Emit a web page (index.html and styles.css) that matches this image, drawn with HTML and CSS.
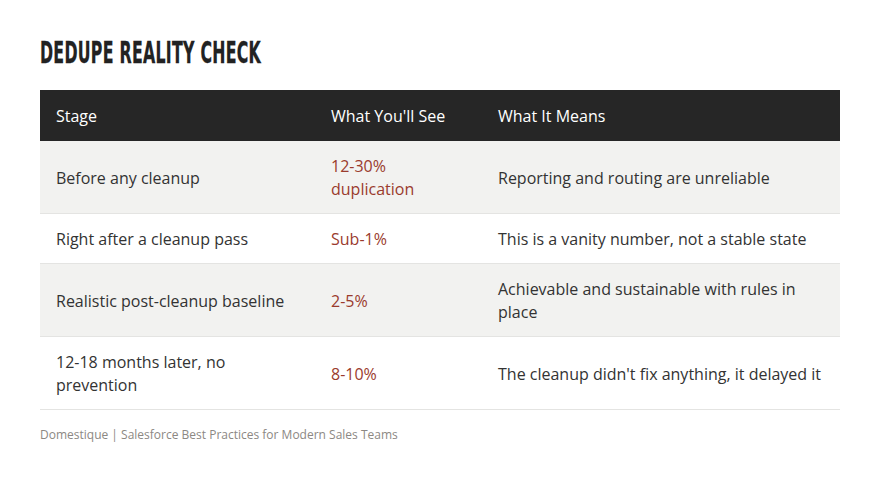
FILE: index.html
```html
<!DOCTYPE html>
<html>
<head>
<meta charset="utf-8">
<link rel="stylesheet" href="styles.css">
</head>
<body>
<div class="page">
  <h1 class="title">Dedupe Reality Check</h1>
  <table class="grid">
    <thead>
      <tr><th class="c1">Stage</th><th class="c2">What You'll See</th><th class="c3">What It Means</th></tr>
    </thead>
    <tbody>
      <tr class="alt"><td>Before any cleanup</td><td class="red">12-30% duplication</td><td>Reporting and routing are unreliable</td></tr>
      <tr><td>Right after a cleanup pass</td><td class="red">Sub-1%</td><td>This is a vanity number, not a stable state</td></tr>
      <tr class="alt"><td>Realistic post-cleanup baseline</td><td class="red">2-5%</td><td>Achievable and sustainable with rules in place</td></tr>
      <tr><td>12-18 months later, no prevention</td><td class="red">8-10%</td><td>The cleanup didn't fix anything, it delayed it</td></tr>
    </tbody>
  </table>
  <p class="foot">Domestique | Salesforce Best Practices for Modern Sales Teams</p>
</div>
</body>
</html>
```
FILE: styles.css
```css
html, body { margin: 0; padding: 0; background: #ffffff; }
.page { padding: 36px 40px 0 40px; font-family: "Open Sans", "Liberation Sans", sans-serif; color: #333333; }
.title {
  margin: 0 0 22px 0;
  font-family: "Liberation Sans Narrow", "DejaVu Sans Condensed", sans-serif;
  font-weight: bold;
  font-size: 31px;
  line-height: 32px;
  text-transform: uppercase;
  color: #222222;
  display: inline-block;
  transform: scaleX(0.565);
  transform-origin: left center;
  letter-spacing: 0.5px;
  -webkit-text-stroke: 0.3px #222222;
}
.grid { width: 800px; border-collapse: collapse; font-size: 16px; line-height: 23px; }
.grid th { background: #262626; color: #ffffff; font-weight: normal; text-align: left; padding: 15px 16px 13px 16px; }
.grid td { padding: 14px 16px 12px 16px; border-bottom: 1px solid #e4e4e2; vertical-align: middle; }
.grid .c1 { width: 243px; }
.grid .c2 { width: 135px; }
.grid tr.alt td { background: #f2f2f0; }
.grid td.red { color: #9a3b2d; }
.foot { margin: 16px 0 0 0; font-size: 12px; line-height: 18px; color: #8c8883; }
```
